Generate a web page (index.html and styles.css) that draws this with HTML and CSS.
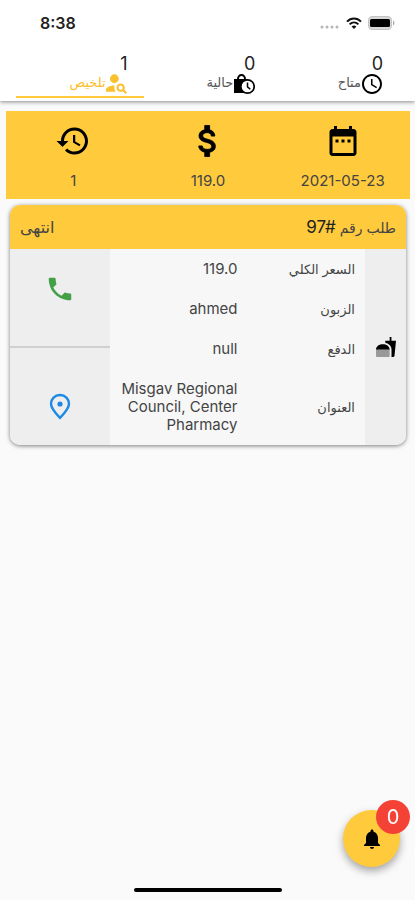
FILE: index.html
```html
<!DOCTYPE html>
<html lang="ar" dir="rtl">
<head>
    <meta charset="UTF-8">
    <meta name="viewport" content="width=device-width, initial-scale=1">
    <title>طلبات</title>
    <link rel="stylesheet" href="styles.css">
</head>
<body>
<header class="top">
    <!-- status bar -->
    <div class="status" dir="ltr">
        <span class="time">8:38</span>
        <span class="signs">
            <svg width="20" height="4" viewBox="0 0 20 4" fill="#b5b5b5"><circle cx="2" cy="2" r="1.5"/><circle cx="7" cy="2" r="1.5"/><circle cx="12" cy="2" r="1.5"/><circle cx="17" cy="2" r="1.5"/></svg>
            <svg width="16" height="12" viewBox="0 0 16 12"><g fill="none" stroke="#111" stroke-width="2"><path d="M1 4.6C5 .4 11 .4 15 4.6"/><path d="M3.6 7.4c2.6-2.6 6.2-2.6 8.8 0"/></g><path d="M8 12 5.6 9.4c1.4-1.2 3.4-1.2 4.8 0z" fill="#111"/></svg>
            <svg width="27" height="14" viewBox="0 0 27 14"><rect x=".5" y=".5" width="23" height="13" rx="3.5" fill="#d8d8d8" stroke="#c4c4c4"/><rect x="2" y="3" width="20" height="8" rx="1.5" fill="#000"/><path d="M25 4.5c2 1 2 4 0 5z" fill="#aaa"/></svg>
        </span>
    </div>
    <!-- tabs -->
    <nav class="tabs">
        <a class="tab" href="#">
            <span class="num">0</span>
            <span class="name">
                <svg width="22" height="22" viewBox="1 1 22 22"><path d="M11.99 2C6.47 2 2 6.48 2 12s4.47 10 9.99 10C17.52 22 22 17.52 22 12S17.52 2 11.99 2zM12 20c-4.42 0-8-3.58-8-8s3.58-8 8-8 8 3.58 8 8-3.58 8-8 8zm.5-13H11v6l5.25 3.15.75-1.23-4.5-2.67z"/></svg>
                متاح
            </span>
        </a>
        <a class="tab" href="#">
            <span class="num">0</span>
            <span class="name">
                <svg width="22" height="22" viewBox="0 0 22 22"><path d="M1 6h3C4 3 6 1 8.500 1S13 3 13 6h2v14H1z" fill="#000"/><path d="M6 6c0-2 1-3 2.500-3S11 4 11 6z" fill="#fff"/><circle cx="14.500" cy="13.500" r="6.700" fill="#fff" stroke="#000" stroke-width="1.700"/><path d="M14.500 9.500v4.300l2.800 2.400" fill="none" stroke="#000" stroke-width="1.500"/></svg>
                حالية
            </span>
        </a>
        <a class="tab active" href="#">
            <span class="num">1</span>
            <span class="name">
                <svg width="22" height="22" viewBox="2 2 21 21" fill="currentColor"><circle cx="10" cy="7.500" r="4.200"/><path d="M10.350 14.010C7.620 13.910 2 15.270 2 18v2h9.540c-2.470-2.760-1.230-5.890-1.190-5.990zM19.430 18.020c.36-.59.57-1.280.57-2.020 0-2.210-1.790-4-4-4s-4 1.790-4 4 1.790 4 4 4c.74 0 1.430-.22 2.020-.57L20.590 22 22 20.590l-2.570-2.570zM16 18c-1.100 0-2-.9-2-2s.9-2 2-2 2 .9 2 2-.9 2-2 2z"/></svg>
                تلخيص
            </span>
        </a>
    </nav>
</header>

<main>
    <!-- day summary -->
    <section class="summary">
        <div class="item">
            <svg width="36" height="36" viewBox="0 0 24 24"><path d="M9 11H7v2h2v-2zm4 0h-2v2h2v-2zm4 0h-2v2h2v-2zm2-7h-1V2h-2v2H8V2H6v2H5c-1.110 0-1.990.9-1.990 2L3 20c0 1.100.89 2 2 2h14c1.100 0 2-.9 2-2V6c0-1.100-.9-2-2-2zm0 16H5V9h14v11z"/></svg>
            <span>2021-05-23</span>
        </div>
        <div class="item">
            <svg width="36" height="36" viewBox="1 1 22 22"><path stroke="#000" stroke-width=".5" d="M11.800 10.900c-2.270-.59-3-1.200-3-2.150 0-1.090 1.010-1.850 2.700-1.850 1.780 0 2.440.85 2.500 2.100h2.210c-.07-1.720-1.120-3.300-3.210-3.810V2.500h-3v2.660c-1.940.42-3.500 1.680-3.500 3.610 0 2.310 1.910 3.460 4.700 4.130 2.500.6 3 1.480 3 2.410 0 .69-.49 1.790-2.700 1.790-2.060 0-2.870-.92-2.980-2.100h-2.200c.12 2.190 1.760 3.420 3.680 3.830v2.670h3v-2.650c1.950-.37 3.500-1.500 3.500-3.550 0-2.840-2.430-3.810-4.700-4.400z"/></svg>
            <span>119.0</span>
        </div>
        <div class="item">
            <svg width="36" height="36" viewBox="0 0 24 24"><path d="M13 3c-4.970 0-9 4.030-9 9H1l3.890 3.890.07.14L9 12H6c0-3.870 3.130-7 7-7s7 3.130 7 7-3.130 7-7 7c-1.930 0-3.680-.79-4.940-2.060l-1.420 1.420C8.270 19.990 10.510 21 13 21c4.970 0 9-4.030 9-9s-4.030-9-9-9zm-1 5v5l4.280 2.540.72-1.210-3.500-2.080V8H12z"/></svg>
            <span>1</span>
        </div>
    </section>

    <!-- order -->
    <article class="order">
        <div class="order-head">
            <h2>طلب رقم <bdi dir="ltr">97#</bdi></h2>
            <span>انتهى</span>
        </div>
        <div class="order-body">
            <div class="kind">
                <svg width="20" height="20" viewBox="1 1 22 22"><path d="M18.060 22.990h1.660c.84 0 1.530-.64 1.630-1.460L23 5.050h-5V1h-1.970v4.050h-4.970l.3 2.340c1.710.47 3.310 1.320 4.270 2.260 1.440 1.420 2.430 2.890 2.430 5.290v8.050zM16.030 14.990c0-8-15.030-8-15.030 0z"/><path d="M1 15h15v7c0 .6-.4 1-1 1H2c-.6 0-1-.4-1-1z" fill="#999"/></svg>
            </div>
            <table class="info">
                <tr><th>السعر الكلي</th><td dir="ltr">119.0</td></tr>
                <tr><th>الزبون</th><td dir="ltr">ahmed</td></tr>
                <tr><th>الدفع</th><td dir="ltr">null</td></tr>
                <tr><th>العنوان</th><td dir="ltr">Misgav Regional Council, Center Pharmacy</td></tr>
            </table>
            <div class="actions">
                <button type="button" aria-label="اتصال">
                    <svg width="30" height="30" viewBox="0 0 24 24" fill="#43a047"><path d="M6.620 10.790c1.440 2.830 3.760 5.140 6.590 6.590l2.200-2.200c.27-.27.67-.36 1.020-.24 1.120.37 2.330.57 3.570.57.55 0 1 .45 1 1V20c0 .55-.45 1-1 1-9.390 0-17-7.610-17-17 0-.55.45-1 1-1h3.500c.55 0 1 .45 1 1 0 1.250.2 2.450.57 3.570.11.35.03.74-.25 1.020l-2.200 2.200z"/></svg>
                </button>
                <button type="button" aria-label="الموقع">
                    <svg width="30" height="30" viewBox="0 0 30 30"><path d="M15 4c-5.200 0-9 3.800-9 8.800 0 4.600 5 10 9 14 4-4 9-9.400 9-14C24 7.800 20.200 4 15 4z" fill="none" stroke="#1e88e5" stroke-width="2.400"/><circle cx="15" cy="13" r="2.600" fill="#1e88e5"/></svg>
                </button>
            </div>
        </div>
    </article>
</main>

<!-- notifications -->
<button type="button" class="bell" aria-label="الإشعارات">
    <svg width="24" height="24" viewBox="0 0 24 24"><path d="M12 22c1.100 0 2-.9 2-2h-4c0 1.100.89 2 2 2zm6-6v-5c0-3.070-1.640-5.640-4.500-6.320V4c0-.83-.67-1.500-1.500-1.500s-1.500.67-1.500 1.500v.68C7.630 5.360 6 7.920 6 11v5l-2 2v1h16v-1l-2-2z"/></svg>
    <span class="badge">0</span>
</button>
<div class="homebar"></div>
</body>
</html>
```

FILE: styles.css
```css
*{
    box-sizing: border-box;
}
body{
    margin: 0;
    min-height: 100vh;
    background: #fafafa;
    color: #444;
    font: 15px/18px Inter, "DejaVu Sans", sans-serif;
}
svg{
    display: block;
    flex: none;
}
button{
    border: 0;
    padding: 0;
    font: inherit;
    cursor: pointer;
}

/* header */
.top{
    background: #fff;
    box-shadow: 0 1px 4px rgba(0,0,0,.45);
}
.status{
    display: flex;
    justify-content: space-between;
    align-items: center;
    height: 46px;
    padding: 0 20px 0 40px;
}
.time{
    font-size: 16px;
    font-weight: 600;
    color: #222;
}
.signs{
    display: flex;
    align-items: center;
    gap: 6px;
}
.signs svg:first-child{
    margin-top: 8px;
}
.tabs{
    display: flex;
    padding: 9px 16px 3px;
}
.tab{
    flex: 1;
    padding: 0 16px;
    border-bottom: 2px solid transparent;
    color: #222;
    text-decoration: none;
}
.num{
    display: block;
    font-size: 18px;
    line-height: 18px;
}
.name{
    display: flex;
    align-items: flex-start;
    height: 23px;
    font-size: 13px;
    color: #555;
}
.active{
    border-color: #ffca3c;
}
.active .name{
    color: #fbc02d;
}

/* day summary */
.summary{
    display: flex;
    margin: 10px 5px 6px 6px;
    padding: 12px 0 9px;
    background: #ffca3c;
}
.item{
    flex: 1;
    display: flex;
    flex-direction: column;
    align-items: center;
    gap: 13px;
}

/* order card */
.order{
    margin: 0 9px 0 10px;
    border-radius: 10px;
    overflow: hidden;
    background: #f7f7f7;
    box-shadow: 0 1px 4px rgba(0,0,0,.5);
}
.order-head{
    display: flex;
    justify-content: space-between;
    align-items: center;
    height: 44px;
    padding: 0 10px;
    background: #ffca3c;
    font-size: 16px;
}
.order-head h2{
    margin: 0;
    font-size: 14px;
    font-weight: 400;
}
.order-head bdi{
    font-size: 17px;
    color: #222;
}
.order-body{
    display: flex;
}
.kind{
    display: flex;
    align-items: center;
    justify-content: center;
    width: 41px;
    background: #eee;
}
.info{
    flex: 1;
    table-layout: fixed;
    border-collapse: collapse;
}
.info th,
.info td{
    width: 50%;
    padding: 11px 0;
    font-weight: 400;
    text-align: right;
}
.info th{
    padding-right: 10px;
    font-size: 13px;
}
.actions{
    display: flex;
    flex-direction: column;
    width: 100px;
}
.actions button{
    flex: 1;
    display: flex;
    align-items: center;
    justify-content: center;
    padding-bottom: 18px;
    background: #eee;
}
.actions button + button{
    padding: 18px 0 0;
    border-top: 2px solid #d0d0d0;
}

/* floating bell */
.bell{
    position: fixed;
    right: 15px;
    bottom: 33px;
    display: flex;
    align-items: center;
    justify-content: center;
    width: 57px;
    height: 57px;
    border-radius: 50%;
    background: #ffca3c;
    box-shadow: 0 4px 8px rgba(0,0,0,.35);
}
.badge{
    position: absolute;
    top: -10px;
    right: -10px;
    width: 34px;
    border-radius: 50%;
    background: #f44336;
    color: #fff;
    font-size: 20px;
    line-height: 34px;
}
.homebar{
    position: fixed;
    bottom: 8px;
    left: 0;
    right: 0;
    width: 148px;
    height: 4px;
    margin: 0 auto;
    border-radius: 2px;
    background: #000;
}
```
